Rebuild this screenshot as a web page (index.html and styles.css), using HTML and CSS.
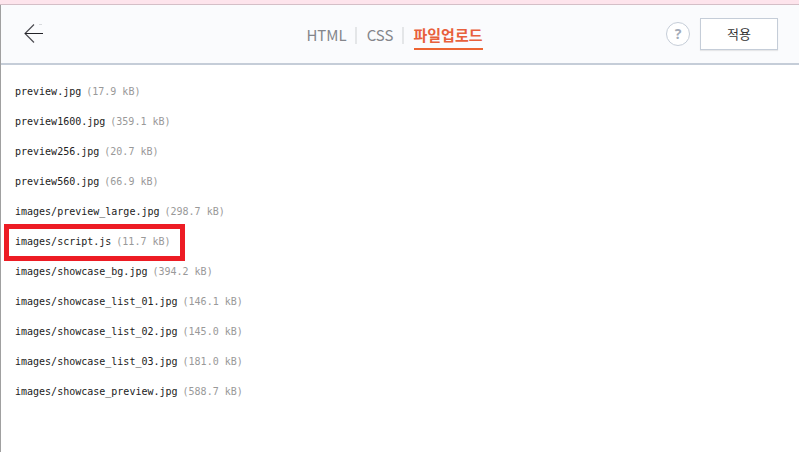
FILE: index.html
```html
<!DOCTYPE html>
<html lang="ko">
<head>
<meta charset="utf-8">
<meta name="viewport" content="width=device-width, initial-scale=1">
<title>파일업로드</title>
<link rel="stylesheet" href="styles.css">
</head>
<body>
<div class="strip"></div>
<div class="editor">
  <header class="header">
    <button class="back" type="button" aria-label="뒤로">
      <svg width="20" height="20" viewBox="0 0 20 20" fill="none">
        <path d="M10 .5 1 9.5l9 9" stroke="#4c4c52" stroke-width="1.2"/>
        <path d="M1 9.5h18" stroke="#222228"/>
        <path d="M15 .5h3" stroke="#d8dadd"/>
      </svg>
    </button>
    <nav class="tabs">
      <a class="tab" href="#html">HTML</a>
      <a class="tab" href="#css">CSS</a>
      <a class="tab tab-active" href="#files" aria-current="page">파일업로드</a>
    </nav>
    <div class="actions">
      <button class="help" type="button">?</button>
      <button class="apply" type="button">적용</button>
    </div>
  </header>
  <main>
    <ul class="files">
      <li><span class="file">preview.jpg <span class="size">(17.9 kB)</span></span></li>
      <li><span class="file">preview1600.jpg <span class="size">(359.1 kB)</span></span></li>
      <li><span class="file">preview256.jpg <span class="size">(20.7 kB)</span></span></li>
      <li><span class="file">preview560.jpg <span class="size">(66.9 kB)</span></span></li>
      <li><span class="file">images/preview_large.jpg <span class="size">(298.7 kB)</span></span></li>
      <li><span class="file marked">images/script.js <span class="size">(11.7 kB)</span></span></li>
      <li><span class="file">images/showcase_bg.jpg <span class="size">(394.2 kB)</span></span></li>
      <li><span class="file">images/showcase_list_01.jpg <span class="size">(146.1 kB)</span></span></li>
      <li><span class="file">images/showcase_list_02.jpg <span class="size">(145.0 kB)</span></span></li>
      <li><span class="file">images/showcase_list_03.jpg <span class="size">(181.0 kB)</span></span></li>
      <li><span class="file">images/showcase_preview.jpg <span class="size">(588.7 kB)</span></span></li>
    </ul>
  </main>
</div>
</body>
</html>
```
FILE: styles.css
```css
* { box-sizing: border-box; }

body {
  margin: 0;
  min-height: 100vh;
  display: flex;
  flex-direction: column;
  background: #fff;
  font-family: "Noto Sans CJK KR", sans-serif;
}

button {
  padding: 0;
  font-family: inherit;
  cursor: pointer;
}

.strip {
  height: 5px;
  background: #fde4ec;
  border-bottom: 1px solid #d4bfc7;
}

.editor {
  flex: 1;
  border-left: 1px solid #a0a0a0;
}

.header {
  display: grid;
  grid-template-columns: 1fr auto 1fr;
  align-items: center;
  height: 60px;
  padding: 0 21px 0 10px;
  background: #fafbfd;
  border-bottom: 2px solid #c5cdd8;
}

.back {
  display: flex;
  justify-content: center;
  width: 46px;
  border: 0;
  background: none;
}

.tabs {
  display: flex;
  align-items: center;
  padding-top: 2px;
}

.tab {
  position: relative;
  padding: 4px 0;
  color: #84868b;
  font-size: 15px;
  line-height: 22px;
  text-decoration: none;
}

.tab + .tab { margin-left: 20px; }

.tab + .tab::before {
  content: "";
  position: absolute;
  left: -12px;
  top: 7px;
  width: 2px;
  height: 17px;
  background: #e4e6e8;
}

.tab-active {
  color: #e8603c;
  font-weight: 700;
}

.tab-active::after {
  content: "";
  position: absolute;
  left: 0;
  right: 0;
  bottom: 0;
  height: 2px;
  background: #ed6432;
}

.actions {
  display: flex;
  justify-content: flex-end;
  align-items: center;
  gap: 10px;
}

.help {
  width: 24px;
  height: 24px;
  border: 1px solid #c5cdd8;
  border-radius: 50%;
  background: #fff;
  color: #a3abb8;
  font: 700 14px/20px "Open Sans", sans-serif;
}

.apply {
  width: 78px;
  height: 32px;
  padding-bottom: 2px;
  border: 1px solid #c5cdd8;
  background: #fff;
  box-shadow: 0 1px 1px rgba(0, 0, 0, .08);
  color: #333;
  font-size: 13px;
}

.files {
  margin: 0;
  padding: 12px 14px;
  list-style: none;
  color: #222;
  font: 10px/30px "DejaVu Sans Mono", monospace;
}

.files li {
  display: flex;
  height: 30px;
}

.file {
  display: flex;
  gap: 5px;
  position: relative;
}

.size { color: #999; }

.marked::after {
  content: "";
  position: absolute;
  inset: -3px -14px -4px -11px;
  border: 5px solid #ed1c24;
}
```
